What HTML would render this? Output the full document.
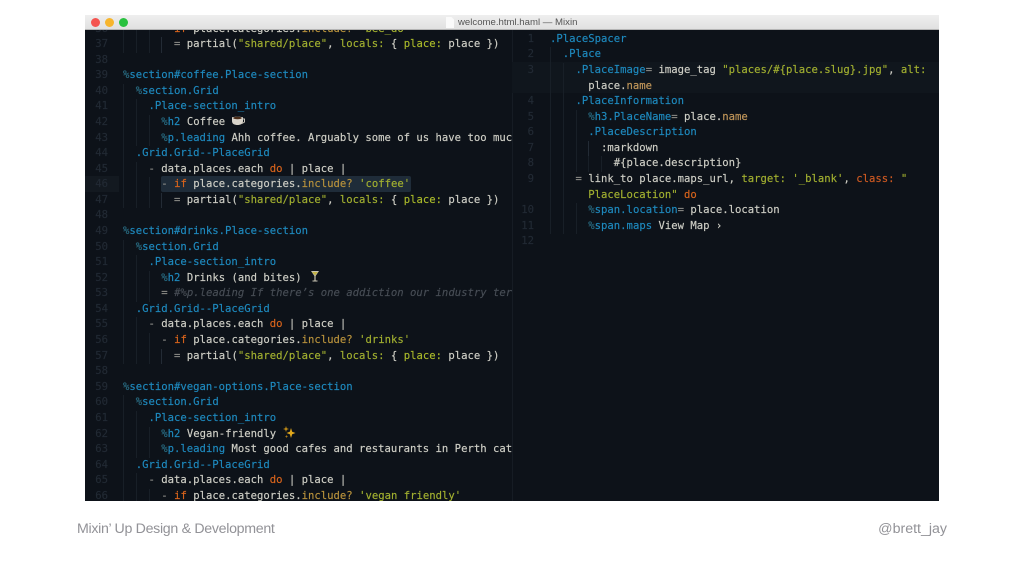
<!DOCTYPE html>
<html><head><meta charset="utf-8"><title>Mixin</title>
<style>
html,body{margin:0;padding:0;background:#fff;width:1024px;height:576px;overflow:hidden}
#all{position:absolute;left:0;top:0;width:1024px;height:576px;filter:blur(.35px)}
#win{position:absolute;left:85px;top:15px;width:854px;height:486px;background:#0d1219;overflow:hidden}
#bar{position:absolute;left:0;top:0;width:854px;height:14px;background:linear-gradient(#eeeeee,#e0e0e0);border-bottom:.5px solid #b5b5b5;z-index:5}
.dot{position:absolute;top:2.8px;width:9px;height:9px;border-radius:50%}
#title{position:absolute;left:373px;top:0;font:9.6px/15px "Liberation Sans",sans-serif;color:#555;white-space:pre}
.pane{position:absolute;top:14.5px;height:472px;overflow:hidden;font:10.6px/15.59px "DejaVu Sans Mono",monospace;color:#cfcfc6;-webkit-text-stroke:.15px}
#L{left:0;width:427px;border-right:1px solid #161c24}
#R{left:427px;width:427px}
.in{position:absolute;left:0;width:100%}
.r{position:relative;height:15.59px;padding-left:38px;white-space:pre;box-sizing:border-box}
.r i{position:absolute;left:0;width:23px;text-align:right;font-style:normal;color:#222a34}
#R .r i{width:22px}
.g1{background:linear-gradient(#181f27,#181f27) 38px 0/1px 100% no-repeat}
.g2{background:linear-gradient(#181f27,#181f27) 38px 0/1px 100% no-repeat,linear-gradient(#181f27,#181f27) 51px 0/1px 100% no-repeat}
.g3{background:linear-gradient(#181f27,#181f27) 38px 0/1px 100% no-repeat,linear-gradient(#181f27,#181f27) 51px 0/1px 100% no-repeat,linear-gradient(#181f27,#181f27) 64px 0/1px 100% no-repeat}
.g4{background:linear-gradient(#181f27,#181f27) 38px 0/1px 100% no-repeat,linear-gradient(#181f27,#181f27) 51px 0/1px 100% no-repeat,linear-gradient(#181f27,#181f27) 64px 0/1px 100% no-repeat,linear-gradient(#232b35,#232b35) 76px 0/1px 100% no-repeat}
.g5{background:linear-gradient(#181f27,#181f27) 38px 0/1px 100% no-repeat,linear-gradient(#181f27,#181f27) 51px 0/1px 100% no-repeat,linear-gradient(#181f27,#181f27) 64px 0/1px 100% no-repeat,linear-gradient(#181f27,#181f27) 76px 0/1px 100% no-repeat,linear-gradient(#181f27,#181f27) 89px 0/1px 100% no-repeat}
.b{color:#1e8abf}.p{color:#2a6f86}.s{color:#a2b030}.k{color:#d9641c}.m{color:#b8923c}.y{color:#a9b92a}.o{color:#8d8d88}
.n{color:#c2975a}.c{color:#474d55;font-style:italic}.q{color:#cf5a22}
#sel{position:absolute;left:76px;top:146.4px;width:250px;height:16px;background:#1f2c39;border-radius:2px}
#gut{position:absolute;left:0;top:146.4px;width:34px;height:16px;background:#131920}
#act{position:absolute;left:0;top:32.8px;width:427px;height:31px;background:#10161d}
.em{position:absolute;z-index:3}
.ft{position:absolute;top:520px;font:14.2px/18px "Liberation Sans",sans-serif;color:#929297;white-space:pre}
</style></head><body>
<div id="all">
<div id="win">
<div id="bar">
<div class="dot" style="left:5.5px;background:#f4544f"></div>
<div class="dot" style="left:19.8px;background:#f7b52d"></div>
<div class="dot" style="left:34.2px;background:#29c13f"></div>
<svg style="position:absolute;left:361px;top:2px" width="8" height="11"><path d="M0 0H5.5L8 2.5V11H0Z" fill="#fafafa"/></svg>
<div id="title">welcome.html.haml — Mixin</div>
</div>
<div class="pane" id="L"><div id="gut"></div><div id="sel"></div><div class="in" style="top:-8px">
<div class="r g3"><i>36</i>      <span class="o">-</span> <span class="k">if</span> place.categories.<span class="m">include?</span> <span class="s">'bee_do'</span></div>
<div class="r g4"><i>37</i>        <span class="o">=</span> partial(<span class="s">"shared/place"</span>, <span class="s">locals:</span> { <span class="y">place:</span> place })</div>
<div class="r"><i>38</i></div>
<div class="r"><i>39</i><span class="p">%</span><span class="b">section#coffee.Place-section</span></div>
<div class="r g1"><i>40</i>  <span class="p">%</span><span class="b">section.Grid</span></div>
<div class="r g2"><i>41</i>    <span class="b">.Place-section_intro</span></div>
<div class="r g3"><i>42</i>      <span class="p">%</span><span class="b">h2</span> Coffee</div>
<div class="r g3"><i>43</i>      <span class="p">%</span><span class="b">p.leading</span> Ahh coffee. Arguably some of us have too much coffee in our lives</div>
<div class="r g1"><i>44</i>  <span class="b">.Grid.Grid--PlaceGrid</span></div>
<div class="r g2"><i>45</i>    <span class="o">-</span> data.places.each <span class="k">do</span> | place |</div>
<div class="r g3"><i>46</i>      <span class="o">-</span> <span class="k">if</span> place.categories.<span class="m">include?</span> <span class="s">'coffee'</span></div>
<div class="r g4"><i>47</i>        <span class="o">=</span> partial(<span class="s">"shared/place"</span>, <span class="s">locals:</span> { <span class="y">place:</span> place })</div>
<div class="r"><i>48</i></div>
<div class="r"><i>49</i><span class="p">%</span><span class="b">section#drinks.Place-section</span></div>
<div class="r g1"><i>50</i>  <span class="p">%</span><span class="b">section.Grid</span></div>
<div class="r g2"><i>51</i>    <span class="b">.Place-section_intro</span></div>
<div class="r g3"><i>52</i>      <span class="p">%</span><span class="b">h2</span> Drinks (and bites)</div>
<div class="r g3"><i>53</i>      <span class="o">=</span> <span class="c">#%p.leading If there’s one addiction our industry terribly has</span></div>
<div class="r g1"><i>54</i>  <span class="b">.Grid.Grid--PlaceGrid</span></div>
<div class="r g2"><i>55</i>    <span class="o">-</span> data.places.each <span class="k">do</span> | place |</div>
<div class="r g3"><i>56</i>      <span class="o">-</span> <span class="k">if</span> place.categories.<span class="m">include?</span> <span class="s">'drinks'</span></div>
<div class="r g4"><i>57</i>        <span class="o">=</span> partial(<span class="s">"shared/place"</span>, <span class="s">locals:</span> { <span class="y">place:</span> place })</div>
<div class="r"><i>58</i></div>
<div class="r"><i>59</i><span class="p">%</span><span class="b">section#vegan-options.Place-section</span></div>
<div class="r g1"><i>60</i>  <span class="p">%</span><span class="b">section.Grid</span></div>
<div class="r g2"><i>61</i>    <span class="b">.Place-section_intro</span></div>
<div class="r g3"><i>62</i>      <span class="p">%</span><span class="b">h2</span> Vegan-friendly</div>
<div class="r g3"><i>63</i>      <span class="p">%</span><span class="b">p.leading</span> Most good cafes and restaurants in Perth cater for vegans</div>
<div class="r g1"><i>64</i>  <span class="b">.Grid.Grid--PlaceGrid</span></div>
<div class="r g2"><i>65</i>    <span class="o">-</span> data.places.each <span class="k">do</span> | place |</div>
<div class="r g3"><i>66</i>      <span class="o">-</span> <span class="k">if</span> place.categories.<span class="m">include?</span> <span class="s">'vegan_friendly'</span></div>
</div></div>
<div class="pane" id="R"><div id="act"></div><div class="in" style="top:2.3px">
<div class="r"><i>1</i><span class="b">.PlaceSpacer</span></div>
<div class="r g1"><i>2</i>  <span class="b">.Place</span></div>
<div class="r g2"><i>3</i>    <span class="b">.PlaceImage</span><span class="o">=</span> image_tag <span class="s">"places/#{place.slug}.jpg"</span>, <span class="s">alt:</span></div>
<div class="r g2">      place.<span class="n">name</span></div>
<div class="r g2"><i>4</i>    <span class="b">.PlaceInformation</span></div>
<div class="r g3"><i>5</i>      <span class="p">%</span><span class="b">h3.PlaceName</span><span class="o">=</span> place.<span class="n">name</span></div>
<div class="r g3"><i>6</i>      <span class="b">.PlaceDescription</span></div>
<div class="r g4"><i>7</i>        :markdown</div>
<div class="r g5"><i>8</i>          #{place.description}</div>
<div class="r g2"><i>9</i>    <span class="o">=</span> link_to place.maps_url, <span class="s">target:</span> <span class="s">'_blank'</span>, <span class="q">class:</span> <span class="s">"</span></div>
<div class="r g2">      <span class="s">PlaceLocation"</span> <span class="k">do</span></div>
<div class="r g3"><i>10</i>      <span class="p">%</span><span class="b">span.location</span><span class="o">=</span> place.location</div>
<div class="r g3"><i>11</i>      <span class="p">%</span><span class="b">span.maps</span> View Map ›</div>
<div class="r"><i>12</i></div>
</div></div>
</div>
<svg class="em" style="left:231px;top:115px" width="15" height="12" viewBox="0 0 15 12"><path d="M1 2.5C1 1.5 12 1.5 12 2.5V6C12 9 9.5 10 6.5 10S1 9 1 6Z" fill="#d8d4ca"/><ellipse cx="6.5" cy="3" rx="4.3" ry="1.3" fill="#4a2c18"/><path d="M12 4H13.5V7L11 8.5" fill="none" stroke="#c8c4ba" stroke-width="1"/></svg>
<svg class="em" style="left:310px;top:270px" width="10" height="13" viewBox="0 0 10 13"><path d="M1 1H9L5.6 6V10.5H7.5V11.5H2.5V10.5H4.4V6Z" fill="#c8c4b2"/><path d="M2 2H8L5 5.5Z" fill="#c2b244"/></svg>
<svg class="em" style="left:283px;top:425px" width="13" height="14" viewBox="0 0 13 14"><path d="M8 3L9.2 6.8L12.5 8L9.2 9.2L8 13L6.8 9.2L3.5 8L6.8 6.8Z" fill="#e2a81c"/><path d="M3 1L3.7 3.3L6 4L3.7 4.7L3 7L2.3 4.7L0 4L2.3 3.3Z" fill="#c89016"/><path d="M3.5 10L4 11L5 11.5L4 12L3.5 13L3 12L2 11.5L3 11Z" fill="#a87a14"/></svg>
<div class="ft" style="left:77px;letter-spacing:-.31px">Mixin’ Up Design &amp; Development</div>
<div class="ft" style="right:77px">@brett_jay</div>
</div>
</body></html>
